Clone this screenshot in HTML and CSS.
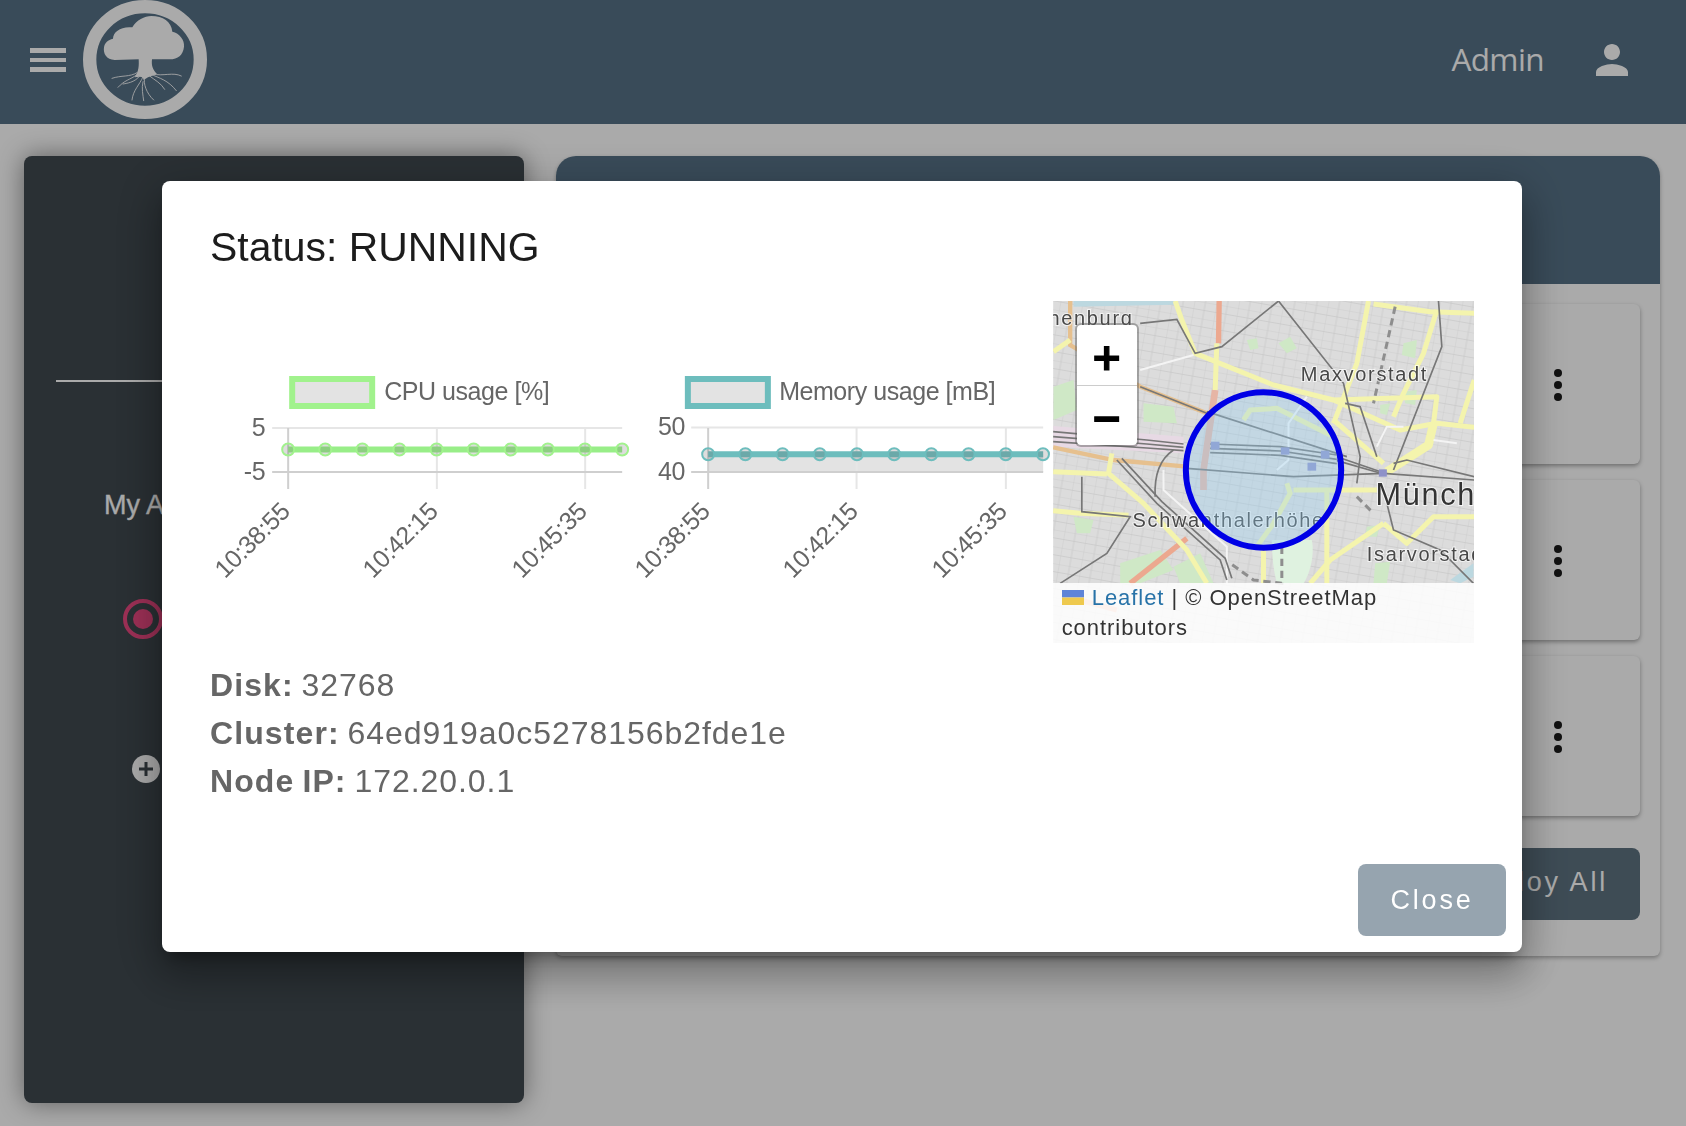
FILE: index.html
```html
<!DOCTYPE html>
<html lang="en">
<head>
<meta charset="utf-8">
<title>Status</title>
<link rel="stylesheet" href="styles.css">
</head>
<body>
<header class="topbar">
  <div class="topbar-left">
    <button class="burger" aria-label="Menu"><span></span><span></span><span></span></button>
    <svg class="logo" viewBox="10 0 372 357" preserveAspectRatio="none">
      <ellipse class="logo-ring" cx="196" cy="178.5" rx="166" ry="158.5"/>
      <path class="logo-fill" d="M105 180C80 180 70 160 73 142 75 128 85 120 100 116 100 95 125 78 158 82 170 60 195 48 215 48 250 48 275 65 278 95 300 100 315 120 313 140 310 165 295 178 270 178L217 178C215 195 218 208 232 222L205 232 192 240C190 230 185 228 165 232 178 215 178 195 177 178Z"/>
      <g class="logo-roots">
        <path d="M172 218C150 232 125 225 97 235"/>
        <path d="M172 224C150 240 135 240 115 262"/>
        <path d="M180 228C165 248 140 250 130 252"/>
        <path d="M190 230C180 255 160 270 157 300"/>
        <path d="M195 232C190 250 200 280 222 300"/>
        <path d="M190 245C185 265 190 285 192 302"/>
        <path d="M212 222C240 235 265 240 290 272"/>
        <path d="M220 222C250 230 280 215 305 228"/>
        <path d="M210 228C225 240 245 250 255 268"/>
      </g>
    </svg>
  </div>
  <div class="topbar-right">
    <span class="user-name">Admin</span>
    <svg class="user-icon" viewBox="0 0 24 24"><path d="M12 12c2.21 0 4-1.79 4-4s-1.79-4-4-4-4 1.79-4 4 1.79 4 4 4zm0 2c-2.67 0-8 1.34-8 4v2h16v-2c0-2.66-5.33-4-8-4z"/></svg>
  </div>
</header>

<main class="page">
  <aside class="sidebar">
    <hr class="side-rule">
    <h2 class="side-title">My Applications</h2>
    <div class="side-status">
      <svg class="side-dot" viewBox="0 0 40 40"><circle class="dot-ring" cx="20" cy="20" r="18"/><circle class="dot-core" cx="20" cy="20" r="10"/></svg>
    </div>
    <div class="side-add">
      <svg class="add-icon" viewBox="0 0 28 28"><circle class="add-bg" cx="14" cy="14" r="14"/><path class="add-plus" d="M14 7v14M7 14h14"/></svg>
    </div>
  </aside>

  <section class="panel">
    <div class="panel-head"></div>
    <div class="panel-list">
      <div class="card"><span class="kebab"><i></i><i></i><i></i></span></div>
      <div class="card"><span class="kebab"><i></i><i></i><i></i></span></div>
      <div class="card"><span class="kebab"><i></i><i></i><i></i></span></div>
    </div>
    <div class="panel-actions"><button class="deploy">Deploy All</button></div>
  </section>
</main>

<div class="backdrop"></div>

<div class="modal">
  <div class="modal-body">
    <h1 class="modal-title">Status: RUNNING</h1>
    <div class="modal-grid">
      <svg class="chart" viewBox="0 0 421 342">
        <rect class="legend-cpu" x="82" y="78" width="80" height="27"/>
        <text class="chart-text" x="174" y="99">CPU usage [%]</text>
        <path class="grid" d="M62 127H412M226.7 127V188M375 127V188"/>
        <path class="axis" d="M62 171H412M78 127V188"/>
        <text class="chart-text end" x="55" y="135">5</text>
        <text class="chart-text end" x="55" y="179">-5</text>
        <path class="line-cpu" d="M78 148.5H412"/>
        <g class="pts-cpu">
          <circle cx="78" cy="148.5" r="6"/><circle cx="115.1" cy="148.5" r="6"/><circle cx="152.2" cy="148.5" r="6"/><circle cx="189.3" cy="148.5" r="6"/><circle cx="226.4" cy="148.5" r="6"/><circle cx="263.5" cy="148.5" r="6"/><circle cx="300.6" cy="148.5" r="6"/><circle cx="337.7" cy="148.5" r="6"/><circle cx="374.8" cy="148.5" r="6"/><circle cx="412" cy="148.5" r="6"/>
        </g>
        <text class="chart-text end" transform="translate(81 212) rotate(-45)">10:38:55</text>
        <text class="chart-text end" transform="translate(229 212) rotate(-45)">10:42:15</text>
        <text class="chart-text end" transform="translate(378 212) rotate(-45)">10:45:35</text>
      </svg>

      <svg class="chart" viewBox="0 0 421 342">
        <rect class="legend-mem" x="56.7" y="78" width="80" height="27"/>
        <text class="chart-text" x="148" y="99">Memory usage [mB]</text>
        <rect class="area" x="77" y="153" width="335" height="18"/>
        <path class="grid" d="M60 126.5H412M225.4 127V188M374.7 127V188"/>
        <path class="axis" d="M60 171H412M77 127V188"/>
        <text class="chart-text end" x="53.7" y="134">50</text>
        <text class="chart-text end" x="53.7" y="179">40</text>
        <path class="line-mem" d="M77 153.3H412"/>
        <g class="pts-mem">
          <circle cx="77" cy="153.3" r="6"/><circle cx="114.2" cy="153.3" r="6"/><circle cx="151.4" cy="153.3" r="6"/><circle cx="188.6" cy="153.3" r="6"/><circle cx="225.8" cy="153.3" r="6"/><circle cx="263" cy="153.3" r="6"/><circle cx="300.2" cy="153.3" r="6"/><circle cx="337.4" cy="153.3" r="6"/><circle cx="374.6" cy="153.3" r="6"/><circle cx="411.8" cy="153.3" r="6"/>
        </g>
        <text class="chart-text end" transform="translate(80 212) rotate(-45)">10:38:55</text>
        <text class="chart-text end" transform="translate(228 212) rotate(-45)">10:42:15</text>
        <text class="chart-text end" transform="translate(377 212) rotate(-45)">10:45:35</text>
      </svg>

      <div class="map">
        <svg class="map-canvas" viewBox="39 33 1263 1026">
          <defs>
            <pattern id="streets" width="66" height="50" patternUnits="userSpaceOnUse" patternTransform="rotate(10)">
              <path class="street" d="M0 0H66M0 25H66M0 0V50M33 0V50"/>
            </pattern>
          </defs>
          <rect class="m-land" x="39" y="33" width="1263" height="1026"/>
          <rect class="m-grid" x="39" y="33" width="1263" height="1026"/>
          <path class="m-water" d="M100 33H400V44L100 50z"/>
          <path class="m-water" d="M1230 870L1300 820V860L1260 880z"/>
          <path class="m-rail-area" d="M39 408L430 440V490L39 470z"/>
          <g class="m-green">
            <path d="M40 290L100 270 110 360 40 390z"/>
            <path d="M310 340L400 350 410 400 310 395z"/>
            <path d="M620 150L650 145 655 175 630 180z"/>
            <path d="M715 160L750 140 770 175 740 190z"/>
            <path d="M1090 160L1130 150 1125 205 1085 195z"/>
            <path d="M1090 305L1130 300 1125 345 1095 340z"/>
            <path d="M1020 345L1050 340 1040 375 1020 370z"/>
            <path d="M100 680L160 690 150 730 110 730z"/>
            <path d="M240 820L360 780 400 840 300 880 240 880z"/>
            <path d="M980 710L1020 705 1010 740 975 740z"/>
            <path d="M1005 820L1050 815 1040 880 1000 880z"/>
            <path d="M400 830L480 790 520 880 420 880z"/>
          </g>
          <path class="m-park" d="M695 750H815C825 800 805 860 790 880H710C700 840 695 800 695 750z"/>
          <g class="m-tan">
            <path d="M90 33V165L300 290 500 370"/>
            <path d="M39 472L220 510 440 530"/>
          </g>
          <g class="m-salmon">
            <path d="M537 33L535 160"/>
            <path d="M270 880L440 745"/>
            <path d="M100 925L230 960"/>
          </g>
          <path class="m-salmon-soft" d="M525 300L490 540 490 600"/>
          <g class="m-road">
            <path d="M405 33L425 90 465 190 700 285 880 330 1080 420 1190 400 1302 412"/>
            <path d="M530 160L525 300"/>
            <path d="M985 33L950 220 880 400"/>
            <path d="M1000 42L1170 65 1302 70"/>
            <path d="M1190 60L1150 190 1090 310 1060 380"/>
            <path d="M880 330L1190 320 1180 400"/>
            <path d="M1302 270L1260 400"/>
            <path d="M880 600H1010"/>
            <path d="M215 490L205 550 310 640 440 780 500 880"/>
            <path d="M39 545L200 552"/>
            <path d="M39 662L120 670 265 676"/>
            <path d="M860 600V880"/>
            <path d="M1030 700L870 810 810 880"/>
            <path d="M1302 680L1180 680 1100 760 1030 700"/>
            <path d="M670 780V880"/>
            <path d="M40 185L90 150"/>
            <path d="M610 390L630 360 710 355 880 440"/>
            <path d="M740 580L750 610 700 700 650 770"/>
            <path d="M760 600H890"/>
            <path d="M880 390L1030 520"/>
          </g>
          <path class="m-road-wide" d="M1180 400L1165 465 1040 545"/>
          <g class="m-white">
            <path d="M300 240L460 195"/>
            <path d="M1010 470L1040 410 1090 410M1180 450L1250 460"/>
            <path d="M370 540V600L560 770 560 880"/>
            <path d="M710 540L745 510V400L800 320"/>
          </g>
          <g class="m-rail">
            <path d="M500 365L920 500"/>
            <path d="M440 535L760 560 1030 550 1302 570"/>
            <path d="M715 33L910 280 960 500 950 580"/>
            <path d="M1195 33L1205 170 1060 540"/>
            <path d="M1040 640L1060 720 1200 780 1300 880"/>
            <path d="M400 480Q340 520 345 620"/>
            <path d="M125 560V665L270 680 200 790 60 880"/>
            <path d="M300 100L410 88 465 190 545 170 715 33"/>
            <path d="M1060 520L1100 510 1302 560"/>
            <path d="M915 340L960 350 1010 500"/>
            <path d="M300 290L500 370"/>
            <path d="M39 425L320 450 430 462"/>
            <path d="M39 440L320 462 430 472"/>
            <path d="M39 455L320 474 430 482"/>
            <path d="M510 462L720 470 890 495"/>
            <path d="M510 475L720 483 890 508"/>
            <path d="M510 488L720 496 890 521"/>
            <path d="M890 500L1030 548"/>
            <path d="M890 512L1030 552"/>
            <path d="M230 510L350 640 540 810 560 870"/>
            <path d="M245 505L365 635 555 805 575 865"/>
          </g>
          <path class="m-rail-dash" d="M1065 50L1000 340"/>
          <path class="m-rail-dash" d="M725 770V880L640 870 570 820"/>
          <path class="m-rail-dash" d="M950 620L1000 670"/>
          <g class="m-stn">
            <rect x="512" y="455" width="26" height="24"/>
            <rect x="722" y="472" width="26" height="22"/>
            <rect x="842" y="482" width="26" height="24"/>
            <rect x="802" y="518" width="26" height="24"/>
            <rect x="1016" y="538" width="24" height="22"/>
          </g>
          <text class="m-label" x="280" y="105" text-anchor="end">Nymphenburg</text>
          <text class="m-label" x="782" y="272">Maxvorstadt</text>
          <text class="m-label m-big" x="1006" y="645">München</text>
          <text class="m-label" x="277" y="712">Schwanthalerhöhe</text>
          <text class="m-label" x="980" y="812">Isarvorstadt</text>
          <circle class="m-circle" cx="670" cy="540" r="233"/>
        </svg>
        <div class="zoom-box">
          <a class="zoom-btn">+</a>
          <a class="zoom-btn">−</a>
        </div>
        <div class="attribution">
          <svg class="flag" viewBox="0 0 22 15"><rect class="flag-a" width="22" height="7.5"/><rect class="flag-b" y="7.5" width="22" height="7.5"/></svg>
          <a class="attr-link">Leaflet</a> | © OpenStreetMap contributors
        </div>
      </div>
    </div>
    <div class="details">
      <p class="detail"><b>Disk:</b> 32768</p>
      <p class="detail"><b>Cluster:</b> 64ed919a0c5278156b2fde1e</p>
      <p class="detail"><b>Node IP:</b> 172.20.0.1</p>
    </div>
  </div>
  <div class="modal-actions"><button class="close-btn">Close</button></div>
</div>
</body>
</html>
```
FILE: styles.css
```css
* { box-sizing: border-box; }
html, body { margin: 0; height: 100%; }
body {
  background: #fff;
  font-family: "Liberation Sans", Arial, sans-serif;
  overflow: hidden;
}
button { font-family: inherit; border: 0; }

.topbar {
  height: 124px;
  background: #567186;
  display: flex;
  justify-content: space-between;
  overflow: hidden;
}
.topbar-left { display: flex; align-items: flex-start; padding-left: 30px; }
.burger {
  width: 36px;
  margin: 48px 17px 0 0;
  padding: 0;
  background: none;
  display: flex;
  flex-direction: column;
  gap: 5px;
}
.burger span { display: block; height: 4.7px; background: #fff; }
.logo { width: 124px; height: 119px; flex: none; }
.logo-ring { fill: none; stroke: #fff; stroke-width: 40; }
.logo-fill { fill: #fff; }
.logo-roots { fill: none; stroke: #fff; stroke-width: 2.6; stroke-linecap: round; }

.topbar-right { display: flex; align-items: flex-start; padding-right: 50px; }
.user-name {
  font-family: "Open Sans", sans-serif;
  font-size: 31.5px;
  letter-spacing: -.6px;
  line-height: 40px;
  margin-top: 39px;
  color: #fff;
}
.user-icon { width: 48px; height: 48px; margin: 36px 0 0 44px; fill: #fff; }

.page {
  display: flex;
  align-items: flex-start;
  gap: 32px;
  padding: 32px 26px 0 24px;
}
.sidebar {
  width: 500px;
  height: 947px;
  flex: none;
  background: #3f484e;
  border-radius: 8px;
  padding: 224px 32px 0;
  box-shadow: 0 0 26px rgba(0, 0, 0, .45);
}
.side-rule { margin: 0; border: 0; height: 1.5px; background: #fff; }
.side-title {
  margin: 103px 0 0;
  padding-left: 48px;
  font-size: 27px;
  line-height: 40px;
  font-weight: 400;
  color: #fff;
  -webkit-text-stroke: .3px #fff;
}
.side-status { margin-top: 74px; padding-left: 67px; height: 40px; }
.side-dot { width: 40px; height: 40px; display: block; }
.dot-ring { fill: none; stroke: #ea4880; stroke-width: 4; }
.dot-core { fill: #ea4880; }
.side-add { margin-top: 116px; padding-left: 76px; }
.add-icon { width: 28px; height: 28px; display: block; }
.add-bg { fill: #fff; }
.add-plus { stroke: #3f484e; stroke-width: 3; }

.panel {
  width: 1104px;
  flex: none;
  background: #fff;
  border-radius: 20px 20px 6px 6px;
  box-shadow: 0 2px 4px rgba(0, 0, 0, .3);
}
.panel-head { height: 128px; background: #567186; border-radius: 20px 20px 0 0; }
.panel-list { display: flex; flex-direction: column; gap: 16px; padding: 20px 20px 0; }
.card {
  height: 160px;
  background: #fff;
  border-radius: 6px;
  box-shadow: 0 2px 4px rgba(0, 0, 0, .35);
  display: flex;
  align-items: center;
  justify-content: flex-end;
  padding-right: 78px;
}
.kebab { display: flex; flex-direction: column; gap: 4px; margin-top: 2px; }
.kebab i { width: 8px; height: 8px; border-radius: 50%; background: #1a1a1a; display: block; }
.panel-actions { display: flex; justify-content: flex-end; padding: 32px 20px 36px; }
.deploy {
  height: 72px;
  padding: 0 32px 4px;
  background: #5d7280;
  color: #fff;
  font-size: 27px;
  letter-spacing: 2.8px;
  border-radius: 8px;
}

.backdrop { position: fixed; inset: 0; background: rgba(0, 0, 0, .335); }

.modal {
  position: fixed;
  left: 162px;
  top: 181px;
  width: 1360px;
  background: #fff;
  border-radius: 8px;
  box-shadow: 0 11px 15px -7px rgba(0, 0, 0, .35), 0 24px 38px 3px rgba(0, 0, 0, .2), 0 9px 46px 8px rgba(0, 0, 0, .18);
}
.modal-body { padding: 34px 48px 0; }
.modal-title {
  margin: 0 0 21px;
  font-size: 40.9px;
  line-height: 65px;
  font-weight: 400;
  color: #1c1c1c;
}
.modal-grid { display: grid; grid-template-columns: repeat(3, 1fr); height: 342px; }
.chart { width: 100%; height: 342px; display: block; overflow: visible; }
.chart-text { font-size: 25px; letter-spacing: -.45px; fill: #666; }
.end { text-anchor: end; }
.grid { fill: none; stroke: #e6e6e6; stroke-width: 2; }
.axis { fill: none; stroke: #cfcfcf; stroke-width: 2; }
.area { fill: #e3e3e3; }
.legend-cpu { fill: #e3e3e3; stroke: #a1f28d; stroke-width: 6; }
.legend-mem { fill: #e3e3e3; stroke: #6dbdbd; stroke-width: 6; }
.line-cpu { stroke: #98ee88; stroke-width: 6; fill: none; }
.line-mem { stroke: #6dbdbd; stroke-width: 6; fill: none; }
.pts-cpu circle { fill: rgba(100, 100, 100, .22); stroke: #a1f28d; stroke-width: 2; }
.pts-mem circle { fill: rgba(100, 100, 100, .22); stroke: #6dbdbd; stroke-width: 2; }

.map { position: relative; height: 342px; overflow: hidden; }
.map-canvas { width: 100%; height: 100%; display: block; }
.m-land { fill: #dcdcdc; }
.m-grid { fill: url(#streets); }
.street { fill: none; stroke: #c6c6c6; stroke-width: 2; }
.m-water { fill: #bcd8e0; }
.m-rail-area { fill: #e7d9e4; }
.m-green path { fill: #cfe8c6; }
.m-park { fill: #dff2e0; }
.m-tan path { fill: none; stroke: #e6c08e; stroke-width: 13; }
.m-salmon path { fill: none; stroke: #eca88f; stroke-width: 16; }
.m-salmon-soft { fill: none; stroke: #e6b5a5; stroke-width: 20; }
.m-road path { fill: none; stroke: #f4f4ad; stroke-width: 15; stroke-linejoin: round; }
.m-road-wide { fill: none; stroke: #f4f4ad; stroke-width: 26; stroke-linejoin: round; }
.m-white path { fill: none; stroke: #f4f4f4; stroke-width: 6; }
.m-rail path { fill: none; stroke: #777; stroke-width: 5; }
.m-rail-dash { fill: none; stroke: #8e8e8e; stroke-width: 9; stroke-dasharray: 22 14; }
.m-stn rect { fill: #8f92c8; }
.m-label {
  font-family: "Liberation Sans", sans-serif;
  font-size: 60px;
  letter-spacing: 5px;
  fill: #484848;
  stroke: rgba(255, 255, 255, .7);
  stroke-width: 6px;
  paint-order: stroke;
}
.m-big { font-size: 92px; letter-spacing: 5px; fill: #333; }
.m-circle { fill: rgba(150, 205, 240, .35); stroke: #0000e6; stroke-width: 18; }

.zoom-box {
  position: absolute;
  left: 24px;
  top: 24px;
  width: 60px;
  background: #fff;
  border-radius: 4px;
  box-shadow: 0 0 0 2px rgba(90, 90, 90, .45);
}
.zoom-btn {
  display: flex;
  align-items: center;
  justify-content: center;
  height: 60px;
  padding-top: 4px;
  font-family: "DejaVu Sans", sans-serif;
  font-weight: 700;
  font-size: 38px;
  color: #000;
  -webkit-text-stroke: 1.2px #000;
}
.zoom-btn + .zoom-btn { border-top: 1.5px solid #ccc; }

.attribution {
  position: absolute;
  left: 0;
  right: 0;
  bottom: 0;
  height: 60px;
  padding: 0 10px 0 9px;
  background: rgba(255, 255, 255, .85);
  font-size: 22px;
  line-height: 30px;
  letter-spacing: .95px;
  color: #333;
}
.flag { width: 22px; height: 15px; margin-right: 1px; }
.flag-a { fill: #5e84d8; }
.flag-b { fill: #eec94e; }
.attr-link { color: #2873a8; }

.details { margin-top: 18px; }
.detail {
  margin: 0;
  font-size: 32px;
  line-height: 48px;
  letter-spacing: .95px;
  word-spacing: -2px;
  color: #666;
}
.detail b { letter-spacing: 1.1px; }
.modal-actions { display: flex; justify-content: flex-end; padding: 59px 16px 16px; }
.close-btn {
  width: 148px;
  height: 72px;
  background: #96a4af;
  color: #fff;
  font-size: 27px;
  letter-spacing: 2.8px;
  border-radius: 8px;
}
```
